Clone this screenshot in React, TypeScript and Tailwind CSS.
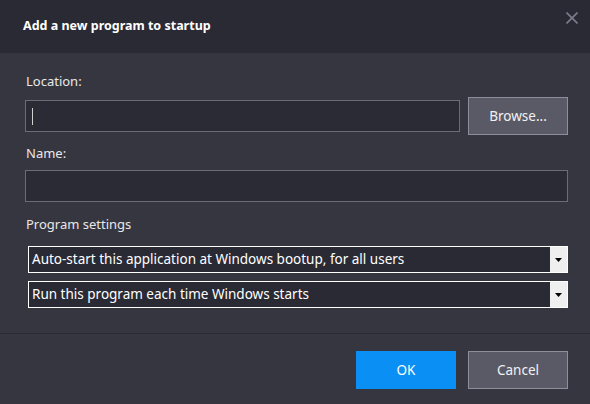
import React from "react";

function Select({ text }: { text: string }) {
  return (
    <div className="flex h-[27px] border border-white bg-[#2a2a35]">
      <div className="flex flex-1 items-center pl-[3px] text-[13.5px] text-white">{text}</div>
      <div className="flex w-[17px] items-center justify-center bg-[#efefef]">
        <svg width="7" height="4" viewBox="0 0 7 4">
          <polygon points="0,0 7,0 3.5,4" fill="#000" />
        </svg>
      </div>
    </div>
  );
}

export default function App() {
  return (
    <div
      className="flex h-[404px] w-[590px] flex-col bg-[#363641]"
      style={{ fontFamily: '"Noto Sans", "Open Sans", sans-serif' }}
    >
      <div className="relative flex h-[53px] items-center bg-[#2a2a35] pl-[23px]">
        <span className="text-[12.5px] font-bold text-white">Add a new program to startup</span>
        <svg className="absolute right-[12px] top-[12px]" width="12" height="12" viewBox="0 0 12 12">
          <path d="M0.5 0.5 L11.5 11.5 M11.5 0.5 L0.5 11.5" stroke="#7c7c8c" strokeWidth="1.6" />
        </svg>
      </div>
      <div className="flex flex-col px-[22px]">
        <div className="mt-[19px] h-[18px] pl-[4px] text-[13px] leading-[18px] text-[#e8e8e8]">Location:</div>
        <div className="mt-[7px] flex h-[38px] items-center gap-[8px]">
          <div className="ml-[3px] flex h-[32px] flex-1 items-center border border-[#6c6c78] bg-[#2b2b36] pl-[6px]">
            <div className="h-[17px] w-[1px] bg-[#d0d0d0]" />
          </div>
          <div className="flex h-[38px] w-[100px] items-center justify-center border border-[#8e8e9a] bg-[#5a5a67] text-[13.5px] text-[#f2f2f2]">
            Browse...
          </div>
        </div>
        <div className="mt-[9px] h-[18px] pl-[4px] text-[13px] leading-[18px] text-[#e8e8e8]">Name:</div>
        <div className="ml-[3px] mt-[8px] h-[32px] border border-[#6c6c78] bg-[#2b2b36]" />
        <div className="mt-[13px] h-[18px] pl-[4px] text-[13px] leading-[18px] text-[#e8e8e8]">Program settings</div>
        <div className="ml-[6px] mt-[13px] flex flex-col gap-[8px]">
          <Select text="Auto-start this application at Windows bootup, for all users" />
          <Select text="Run this program each time Windows starts" />
        </div>
      </div>
      <div className="mt-[25px] h-[1px] bg-[#2a2a33]" />
      <div className="flex justify-end gap-[12px] pr-[22px] pt-[17px]">
        <div className="flex h-[38px] w-[100px] items-center justify-center bg-[#0a8ff5] text-[13.5px] text-white">OK</div>
        <div className="flex h-[38px] w-[100px] items-center justify-center border border-[#8e8e9a] bg-[#5a5a67] text-[13.5px] text-[#f2f2f2]">
          Cancel
        </div>
      </div>
    </div>
  );
}
